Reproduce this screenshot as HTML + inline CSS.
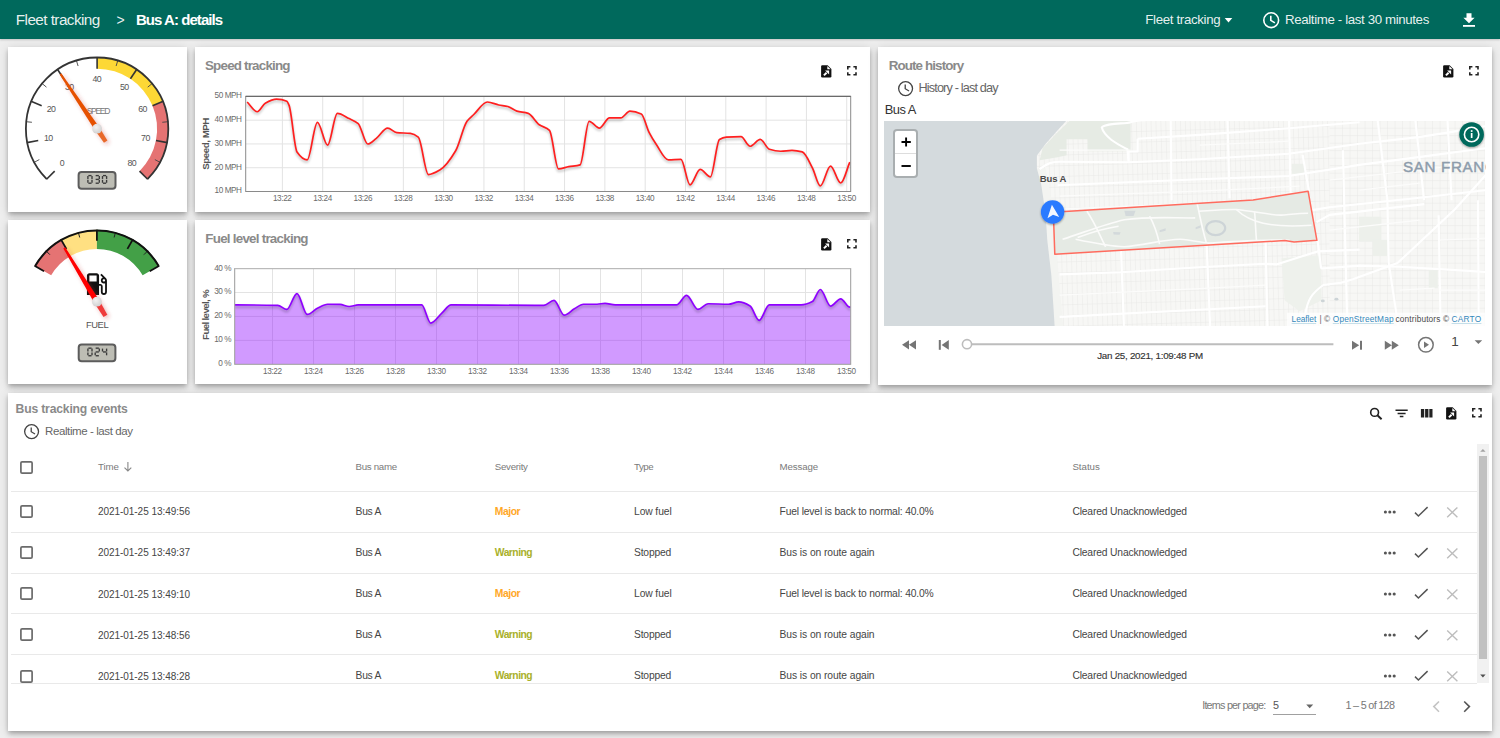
<!DOCTYPE html><html><head><meta charset="utf-8"><style>
*{box-sizing:border-box}
html,body{margin:0;padding:0}
body{width:1500px;height:738px;overflow:hidden;background:#eeeeee;font-family:"Liberation Sans",sans-serif;position:relative}
.a{position:absolute;display:block}
.t{position:absolute;white-space:pre;line-height:1}
.card{position:absolute;background:#fff;box-shadow:0 2px 4px -1px rgba(0,0,0,.2),0 4px 5px 0 rgba(0,0,0,.14),0 1px 10px 0 rgba(0,0,0,.12)}
</style></head><body><div class="a" style="left:0;top:0;width:1500px;height:39px;background:#00695c;box-shadow:0 1px 2px rgba(0,0,0,.18)"></div><span class="t" style="left:15.80px;top:12.19px;font-size:15.3px;color:rgba(255,255,255,0.92);letter-spacing:-0.564px;">Fleet tracking</span><span class="t" style="left:116.50px;top:12.90px;font-size:14px;color:rgba(255,255,255,0.92);">&gt;</span><span class="t" style="left:135.90px;top:12.35px;font-size:15px;color:#fff;font-weight:700;letter-spacing:-0.944px;">Bus A: details</span><span class="t" style="left:1145.30px;top:13.20px;font-size:13.3px;color:rgba(255,255,255,0.92);letter-spacing:-0.341px;">Fleet tracking</span><svg class="a" style="left:1224px;top:17px" width="10" height="7"><path d="M0.7,1 L8.3,1 L4.5,5.6Z" fill="#fff"/></svg><svg class="a" style="left:1261.1px;top:9.5px" width="20.4" height="20.4" viewBox="-10.2 -10.2 20.4 20.4"><circle cx="0" cy="0" r="7.3999999999999995" fill="none" stroke="#fff" stroke-width="1.6"/><path d="M-0.41,-4.51 V0.16 L3.69,2.62" fill="none" stroke="#fff" stroke-width="1.6"/></svg><span class="t" style="left:1285.00px;top:13.20px;font-size:13.3px;color:rgba(255,255,255,0.92);letter-spacing:-0.377px;">Realtime - last 30 minutes</span><svg class="a" style="left:1462px;top:12px" width="14" height="16"><path d="M4.5,1.2 H9.5 V5.8 H12.6 L7,11.2 L1.4,5.8 H4.5Z" fill="#fff"/><rect x="1" y="13" width="12" height="1.8" fill="#fff"/></svg><div class="card" style="left:8px;top:47px;width:179px;height:165px"></div><div class="card" style="left:194.5px;top:47px;width:675.5px;height:165px"></div><div class="card" style="left:8px;top:220px;width:179px;height:164px"></div><div class="card" style="left:194.5px;top:220px;width:675.5px;height:164px"></div><div class="card" style="left:878px;top:47px;width:614px;height:338px"></div><div class="card" style="left:8px;top:393px;width:1484px;height:338px"></div><svg class="a" style="left:0;top:0" width="200" height="400"><defs><filter id="nshadow" x="-50%" y="-50%" width="200%" height="200%"><feGaussianBlur in="SourceAlpha" stdDeviation="2.2"/><feOffset dx="2" dy="2" result="b"/><feFlood flood-color="#c03030" flood-opacity="0.35"/><feComposite in2="b" operator="in"/><feMerge><feMergeNode/><feMergeNode in="SourceGraphic"/></feMerge></filter><radialGradient id="pivg" cx="0.4" cy="0.35" r="0.7"><stop offset="0" stop-color="#f2f2f2"/><stop offset="1" stop-color="#cfcfcf"/></radialGradient></defs><path d="M97.10,57.20 A71.5,71.5 0 0 1 163.16,101.34 L152.53,105.74 A60,60 0 0 0 97.10,68.70Z" fill="#fdd835"/><path d="M163.16,101.34 A71.5,71.5 0 0 1 147.66,179.26 L139.53,171.13 A60,60 0 0 0 152.53,105.74Z" fill="#e57373"/><line x1="54.67" y1="171.13" x2="46.54" y2="179.26" stroke="#333" stroke-width="1.6"/><line x1="39.33" y1="159.58" x2="34.04" y2="162.40" stroke="#444" stroke-width="0.9"/><line x1="38.25" y1="140.41" x2="26.97" y2="142.65" stroke="#333" stroke-width="1.6"/><line x1="31.92" y1="122.28" x2="25.94" y2="121.69" stroke="#444" stroke-width="0.9"/><line x1="41.67" y1="105.74" x2="31.04" y2="101.34" stroke="#333" stroke-width="1.6"/><line x1="46.47" y1="87.15" x2="41.83" y2="83.34" stroke="#444" stroke-width="0.9"/><line x1="63.77" y1="78.81" x2="57.38" y2="69.25" stroke="#333" stroke-width="1.6"/><line x1="78.09" y1="66.02" x2="76.34" y2="60.28" stroke="#444" stroke-width="0.9"/><line x1="97.10" y1="68.70" x2="97.10" y2="57.20" stroke="#333" stroke-width="1.6"/><line x1="116.11" y1="66.02" x2="117.86" y2="60.28" stroke="#444" stroke-width="0.9"/><line x1="130.43" y1="78.81" x2="136.82" y2="69.25" stroke="#333" stroke-width="1.6"/><line x1="147.73" y1="87.15" x2="152.37" y2="83.34" stroke="#444" stroke-width="0.9"/><line x1="152.53" y1="105.74" x2="163.16" y2="101.34" stroke="#333" stroke-width="1.6"/><line x1="162.28" y1="122.28" x2="168.26" y2="121.69" stroke="#444" stroke-width="0.9"/><line x1="155.95" y1="140.41" x2="167.23" y2="142.65" stroke="#333" stroke-width="1.6"/><line x1="154.87" y1="159.58" x2="160.16" y2="162.40" stroke="#444" stroke-width="0.9"/><line x1="139.53" y1="171.13" x2="147.66" y2="179.26" stroke="#333" stroke-width="1.6"/><path d="M46.75,179.05 A71.2,71.2 0 1 1 147.45,179.05" fill="none" stroke="#333" stroke-width="1.8"/><rect x="78.6" y="171.9" width="36.900000000000006" height="16.799999999999983" rx="3" fill="#bdbdb4" stroke="#5c5c5c" stroke-width="2"/><line x1="88.35" y1="175.60" x2="91.55" y2="175.60" stroke="#3a3a3a" stroke-width="1.35"/><line x1="92.00" y1="176.05" x2="92.00" y2="178.95" stroke="#3a3a3a" stroke-width="1.35"/><line x1="92.00" y1="179.85" x2="92.00" y2="182.75" stroke="#3a3a3a" stroke-width="1.35"/><line x1="88.35" y1="183.20" x2="91.55" y2="183.20" stroke="#3a3a3a" stroke-width="1.35"/><line x1="87.90" y1="179.85" x2="87.90" y2="182.75" stroke="#3a3a3a" stroke-width="1.35"/><line x1="87.90" y1="176.05" x2="87.90" y2="178.95" stroke="#3a3a3a" stroke-width="1.35"/><line x1="95.65" y1="175.60" x2="98.85" y2="175.60" stroke="#3a3a3a" stroke-width="1.35"/><line x1="99.30" y1="176.05" x2="99.30" y2="178.95" stroke="#3a3a3a" stroke-width="1.35"/><line x1="95.65" y1="179.40" x2="98.85" y2="179.40" stroke="#3a3a3a" stroke-width="1.35"/><line x1="99.30" y1="179.85" x2="99.30" y2="182.75" stroke="#3a3a3a" stroke-width="1.35"/><line x1="95.65" y1="183.20" x2="98.85" y2="183.20" stroke="#3a3a3a" stroke-width="1.35"/><line x1="102.95" y1="175.60" x2="106.15" y2="175.60" stroke="#3a3a3a" stroke-width="1.35"/><line x1="106.60" y1="176.05" x2="106.60" y2="178.95" stroke="#3a3a3a" stroke-width="1.35"/><line x1="106.60" y1="179.85" x2="106.60" y2="182.75" stroke="#3a3a3a" stroke-width="1.35"/><line x1="102.95" y1="183.20" x2="106.15" y2="183.20" stroke="#3a3a3a" stroke-width="1.35"/><line x1="102.50" y1="179.85" x2="102.50" y2="182.75" stroke="#3a3a3a" stroke-width="1.35"/><line x1="102.50" y1="176.05" x2="102.50" y2="178.95" stroke="#3a3a3a" stroke-width="1.35"/><path d="M34.55,265.70 A72,72 0 0 1 60.90,239.35 L70.50,255.97 A52.8,52.8 0 0 0 51.17,275.30Z" fill="#e57373"/><path d="M60.90,239.35 A72,72 0 0 1 96.90,229.70 L96.90,248.90 A52.8,52.8 0 0 0 70.50,255.97Z" fill="#ffe082"/><path d="M96.90,229.70 A72,72 0 0 1 159.25,265.70 L142.63,275.30 A52.8,52.8 0 0 0 96.90,248.90Z" fill="#43a047"/><line x1="44.07" y1="271.20" x2="34.55" y2="265.70" stroke="#111" stroke-width="1.8"/><line x1="66.40" y1="248.87" x2="60.90" y2="239.35" stroke="#111" stroke-width="1.8"/><line x1="96.90" y1="240.70" x2="96.90" y2="229.70" stroke="#111" stroke-width="1.8"/><line x1="127.40" y1="248.87" x2="132.90" y2="239.35" stroke="#111" stroke-width="1.8"/><line x1="149.73" y1="271.20" x2="159.25" y2="265.70" stroke="#111" stroke-width="1.8"/><line x1="49.88" y1="254.68" x2="45.99" y2="250.79" stroke="#222" stroke-width="1"/><line x1="79.69" y1="237.47" x2="78.27" y2="232.15" stroke="#222" stroke-width="1"/><line x1="114.11" y1="237.47" x2="115.53" y2="232.15" stroke="#222" stroke-width="1"/><line x1="143.92" y1="254.68" x2="147.81" y2="250.79" stroke="#222" stroke-width="1"/><path d="M35.15,266.05 A71.3,71.3 0 0 1 158.65,266.05" fill="none" stroke="#111" stroke-width="2"/><rect x="78.7" y="344.5" width="36.7" height="16.69999999999999" rx="3" fill="#bdbdb4" stroke="#5c5c5c" stroke-width="2"/><line x1="88.35" y1="348.15" x2="91.55" y2="348.15" stroke="#3a3a3a" stroke-width="1.35"/><line x1="92.00" y1="348.60" x2="92.00" y2="351.50" stroke="#3a3a3a" stroke-width="1.35"/><line x1="92.00" y1="352.40" x2="92.00" y2="355.30" stroke="#3a3a3a" stroke-width="1.35"/><line x1="88.35" y1="355.75" x2="91.55" y2="355.75" stroke="#3a3a3a" stroke-width="1.35"/><line x1="87.90" y1="352.40" x2="87.90" y2="355.30" stroke="#3a3a3a" stroke-width="1.35"/><line x1="87.90" y1="348.60" x2="87.90" y2="351.50" stroke="#3a3a3a" stroke-width="1.35"/><line x1="95.65" y1="348.15" x2="98.85" y2="348.15" stroke="#3a3a3a" stroke-width="1.35"/><line x1="99.30" y1="348.60" x2="99.30" y2="351.50" stroke="#3a3a3a" stroke-width="1.35"/><line x1="95.65" y1="351.95" x2="98.85" y2="351.95" stroke="#3a3a3a" stroke-width="1.35"/><line x1="95.20" y1="352.40" x2="95.20" y2="355.30" stroke="#3a3a3a" stroke-width="1.35"/><line x1="95.65" y1="355.75" x2="98.85" y2="355.75" stroke="#3a3a3a" stroke-width="1.35"/><line x1="102.50" y1="348.60" x2="102.50" y2="351.50" stroke="#3a3a3a" stroke-width="1.35"/><line x1="102.95" y1="351.95" x2="106.15" y2="351.95" stroke="#3a3a3a" stroke-width="1.35"/><line x1="106.60" y1="348.60" x2="106.60" y2="351.50" stroke="#3a3a3a" stroke-width="1.35"/><line x1="106.60" y1="352.40" x2="106.60" y2="355.30" stroke="#3a3a3a" stroke-width="1.35"/><g transform="translate(82.1,269.5) scale(1.211)"><path d="M19.77 7.23l.01-.01-3.72-3.72L15 4.56l2.11 2.11c-.94.36-1.61 1.26-1.61 2.33 0 1.38 1.12 2.5 2.5 2.5.36 0 .69-.08 1-.21v7.21c0 .55-.45 1-1 1s-1-.45-1-1V14c0-1.1-.9-2-2-2h-1V5c0-1.1-.9-2-2-2H6c-1.1 0-2 .9-2 2v16h10v-7.5h1.5v5c0 1.38 1.12 2.5 2.5 2.5s2.5-1.12 2.5-2.5V9c0-.69-.28-1.32-.73-1.77zM12 10H6V5h6v5zm6 0c-.55 0-1-.45-1-1s.45-1 1-1 1 .45 1 1-.45 1-1 1z" fill="#111"/></g></svg><span class="t" style="left:59.65px;top:159.22px;font-size:8.8px;color:#555;">0</span><span class="t" style="left:43.90px;top:133.88px;font-size:8.8px;color:#555;letter-spacing:-0.497px;">10</span><span class="t" style="left:46.72px;top:105.28px;font-size:8.8px;color:#555;letter-spacing:-0.497px;">20</span><span class="t" style="left:64.95px;top:83.06px;font-size:8.8px;color:#555;letter-spacing:-0.497px;">30</span><span class="t" style="left:92.45px;top:74.72px;font-size:8.8px;color:#555;letter-spacing:-0.497px;">40</span><span class="t" style="left:119.95px;top:83.06px;font-size:8.8px;color:#555;letter-spacing:-0.497px;">50</span><span class="t" style="left:138.18px;top:105.28px;font-size:8.8px;color:#555;letter-spacing:-0.497px;">60</span><span class="t" style="left:141.00px;top:133.88px;font-size:8.8px;color:#555;letter-spacing:-0.497px;">70</span><span class="t" style="left:127.45px;top:159.22px;font-size:8.8px;color:#555;letter-spacing:-0.497px;">80</span><span class="t" style="left:86.75px;top:106.89px;font-size:8.6px;color:#777;letter-spacing:-1.360px;">SPEED</span><span class="t" style="left:85.90px;top:320.21px;font-size:9.4px;color:#555;letter-spacing:-0.390px;">FUEL</span><svg class="a" style="left:0;top:0" width="200" height="400"><g filter="url(#nshadow)"><path d="M99.26,127.26 L61.26,73.27 L59.60,74.38 L94.94,130.14Z" fill="#e65100"/><path d="M99.26,127.26 L107.44,140.43 L103.98,142.74 L94.94,130.14Z" fill="#e8692a"/></g><circle cx="97.1" cy="128.7" r="4.9" fill="url(#pivg)"/><g filter="url(#nshadow)"><path d="M99.30,300.25 L65.21,247.24 L63.32,248.38 L94.50,303.15Z" fill="#ff0000"/><path d="M99.30,300.25 L107.36,314.65 L103.53,316.97 L94.50,303.15Z" fill="#ef3a3a"/></g><circle cx="96.9" cy="301.7" r="4.9" fill="url(#pivg)"/></svg><svg class="a" style="left:0;top:0" width="880" height="400"><defs><filter id="lshadow" x="-5%" y="-20%" width="110%" height="140%"><feGaussianBlur stdDeviation="1.2"/></filter><clipPath id="cp1"><rect x="245.7" y="96.4" width="605" height="95.1"/></clipPath><clipPath id="cp2"><rect x="234.7" y="268.6" width="616" height="95.7"/></clipPath></defs><line x1="245.7" y1="120.18" x2="850.7" y2="120.18" stroke="#e3e3e3" stroke-width="1"/><line x1="245.7" y1="143.95" x2="850.7" y2="143.95" stroke="#e3e3e3" stroke-width="1"/><line x1="245.7" y1="167.72" x2="850.7" y2="167.72" stroke="#e3e3e3" stroke-width="1"/><line x1="245.7" y1="191.50" x2="850.7" y2="191.50" stroke="#e3e3e3" stroke-width="1"/><line x1="282.40" y1="96.4" x2="282.40" y2="191.5" stroke="#e3e3e3" stroke-width="1"/><line x1="322.71" y1="96.4" x2="322.71" y2="191.5" stroke="#e3e3e3" stroke-width="1"/><line x1="363.02" y1="96.4" x2="363.02" y2="191.5" stroke="#e3e3e3" stroke-width="1"/><line x1="403.33" y1="96.4" x2="403.33" y2="191.5" stroke="#e3e3e3" stroke-width="1"/><line x1="443.64" y1="96.4" x2="443.64" y2="191.5" stroke="#e3e3e3" stroke-width="1"/><line x1="483.95" y1="96.4" x2="483.95" y2="191.5" stroke="#e3e3e3" stroke-width="1"/><line x1="524.26" y1="96.4" x2="524.26" y2="191.5" stroke="#e3e3e3" stroke-width="1"/><line x1="564.57" y1="96.4" x2="564.57" y2="191.5" stroke="#e3e3e3" stroke-width="1"/><line x1="604.88" y1="96.4" x2="604.88" y2="191.5" stroke="#e3e3e3" stroke-width="1"/><line x1="645.19" y1="96.4" x2="645.19" y2="191.5" stroke="#e3e3e3" stroke-width="1"/><line x1="685.50" y1="96.4" x2="685.50" y2="191.5" stroke="#e3e3e3" stroke-width="1"/><line x1="725.81" y1="96.4" x2="725.81" y2="191.5" stroke="#e3e3e3" stroke-width="1"/><line x1="766.12" y1="96.4" x2="766.12" y2="191.5" stroke="#e3e3e3" stroke-width="1"/><line x1="806.43" y1="96.4" x2="806.43" y2="191.5" stroke="#e3e3e3" stroke-width="1"/><line x1="846.74" y1="96.4" x2="846.74" y2="191.5" stroke="#e3e3e3" stroke-width="1"/><g clip-path="url(#cp1)"><path d="M247.13,102.01 C250.53,105.27 253.93,111.77 257.33,111.77 C259.98,111.77 262.62,104.62 265.27,103.15 C269.04,101.04 272.82,99.07 276.60,99.07 C280.00,99.07 283.40,99.72 286.80,101.33 C287.56,101.69 288.31,103.52 289.07,105.42 C291.71,112.05 294.36,148.17 297.00,151.92 C300.40,156.75 303.80,159.86 307.20,159.86 C310.60,159.86 314.00,122.43 317.40,122.43 C320.80,122.43 324.20,145.12 327.60,145.12 C330.85,145.12 334.10,113.36 337.35,113.36 C341.28,113.36 345.20,116.64 349.13,118.58 C352.16,120.07 355.18,120.93 358.20,123.57 C361.37,126.33 364.55,143.98 367.72,143.98 C370.59,143.98 373.46,140.48 376.33,138.31 C380.11,135.46 383.89,128.10 387.67,128.10 C390.69,128.10 393.71,132.35 396.73,132.64 C401.27,133.08 405.80,132.88 410.33,133.32 C412.98,133.58 415.62,134.98 418.27,137.18 C421.67,140.01 425.07,174.61 428.47,174.61 C432.24,174.61 436.02,172.29 439.80,170.07 C445.09,166.97 450.38,159.73 455.67,150.79 C459.44,144.40 463.22,126.56 467.00,121.30 C469.27,118.14 471.53,116.67 473.80,114.49 C478.33,110.13 482.87,102.01 487.40,102.01 C491.18,102.01 494.96,104.18 498.73,104.96 C501.76,105.59 504.78,105.77 507.80,106.55 C510.82,107.34 513.84,110.21 516.87,111.09 C520.64,112.19 524.42,112.09 528.20,113.36 C531.89,114.60 535.58,122.05 539.27,124.70 C542.67,127.14 546.07,126.98 549.47,130.37 C552.49,133.39 555.51,168.94 558.53,168.94 C561.93,168.94 565.33,167.30 568.73,166.67 C572.51,165.96 576.29,166.07 580.07,164.85 C583.09,163.88 586.11,121.30 589.13,121.30 C592.53,121.30 595.93,128.10 599.33,128.10 C602.73,128.10 606.13,117.89 609.53,117.89 C613.31,117.89 617.09,117.89 620.87,117.89 C623.89,117.89 626.91,111.09 629.93,111.09 C633.71,111.09 637.49,112.18 641.27,114.04 C643.91,115.34 646.56,127.51 649.20,132.64 C651.47,137.04 653.73,140.67 656.00,143.98 C660.16,150.07 664.31,159.86 668.47,159.86 C672.62,159.86 676.78,159.41 680.93,159.41 C683.96,159.41 686.98,184.82 690.00,184.82 C693.40,184.82 696.80,169.39 700.20,169.39 C703.60,169.39 707.00,176.88 710.40,176.88 C713.42,176.88 716.44,141.24 719.47,139.45 C721.73,138.10 724.00,137.32 726.27,137.18 C731.18,136.87 736.09,136.72 741.00,136.72 C744.02,136.72 747.04,146.25 750.07,146.25 C753.47,146.25 756.87,139.45 760.27,139.45 C763.29,139.45 766.31,148.24 769.33,149.20 C773.11,150.40 776.89,151.24 780.67,151.24 C784.44,151.24 788.22,150.34 792.00,150.34 C795.40,150.34 798.80,150.96 802.20,151.92 C805.60,152.89 809.00,161.45 812.40,167.80 C815.04,172.74 817.69,185.95 820.33,185.95 C823.73,185.95 827.13,166.22 830.53,166.22 C833.93,166.22 837.33,183.00 840.73,183.00 C843.76,183.00 846.78,169.09 849.80,162.13" fill="none" stroke="rgba(0,0,0,0.18)" stroke-width="2.5" transform="translate(0,2)" filter="url(#lshadow)"/><path d="M247.13,102.01 C250.53,105.27 253.93,111.77 257.33,111.77 C259.98,111.77 262.62,104.62 265.27,103.15 C269.04,101.04 272.82,99.07 276.60,99.07 C280.00,99.07 283.40,99.72 286.80,101.33 C287.56,101.69 288.31,103.52 289.07,105.42 C291.71,112.05 294.36,148.17 297.00,151.92 C300.40,156.75 303.80,159.86 307.20,159.86 C310.60,159.86 314.00,122.43 317.40,122.43 C320.80,122.43 324.20,145.12 327.60,145.12 C330.85,145.12 334.10,113.36 337.35,113.36 C341.28,113.36 345.20,116.64 349.13,118.58 C352.16,120.07 355.18,120.93 358.20,123.57 C361.37,126.33 364.55,143.98 367.72,143.98 C370.59,143.98 373.46,140.48 376.33,138.31 C380.11,135.46 383.89,128.10 387.67,128.10 C390.69,128.10 393.71,132.35 396.73,132.64 C401.27,133.08 405.80,132.88 410.33,133.32 C412.98,133.58 415.62,134.98 418.27,137.18 C421.67,140.01 425.07,174.61 428.47,174.61 C432.24,174.61 436.02,172.29 439.80,170.07 C445.09,166.97 450.38,159.73 455.67,150.79 C459.44,144.40 463.22,126.56 467.00,121.30 C469.27,118.14 471.53,116.67 473.80,114.49 C478.33,110.13 482.87,102.01 487.40,102.01 C491.18,102.01 494.96,104.18 498.73,104.96 C501.76,105.59 504.78,105.77 507.80,106.55 C510.82,107.34 513.84,110.21 516.87,111.09 C520.64,112.19 524.42,112.09 528.20,113.36 C531.89,114.60 535.58,122.05 539.27,124.70 C542.67,127.14 546.07,126.98 549.47,130.37 C552.49,133.39 555.51,168.94 558.53,168.94 C561.93,168.94 565.33,167.30 568.73,166.67 C572.51,165.96 576.29,166.07 580.07,164.85 C583.09,163.88 586.11,121.30 589.13,121.30 C592.53,121.30 595.93,128.10 599.33,128.10 C602.73,128.10 606.13,117.89 609.53,117.89 C613.31,117.89 617.09,117.89 620.87,117.89 C623.89,117.89 626.91,111.09 629.93,111.09 C633.71,111.09 637.49,112.18 641.27,114.04 C643.91,115.34 646.56,127.51 649.20,132.64 C651.47,137.04 653.73,140.67 656.00,143.98 C660.16,150.07 664.31,159.86 668.47,159.86 C672.62,159.86 676.78,159.41 680.93,159.41 C683.96,159.41 686.98,184.82 690.00,184.82 C693.40,184.82 696.80,169.39 700.20,169.39 C703.60,169.39 707.00,176.88 710.40,176.88 C713.42,176.88 716.44,141.24 719.47,139.45 C721.73,138.10 724.00,137.32 726.27,137.18 C731.18,136.87 736.09,136.72 741.00,136.72 C744.02,136.72 747.04,146.25 750.07,146.25 C753.47,146.25 756.87,139.45 760.27,139.45 C763.29,139.45 766.31,148.24 769.33,149.20 C773.11,150.40 776.89,151.24 780.67,151.24 C784.44,151.24 788.22,150.34 792.00,150.34 C795.40,150.34 798.80,150.96 802.20,151.92 C805.60,152.89 809.00,161.45 812.40,167.80 C815.04,172.74 817.69,185.95 820.33,185.95 C823.73,185.95 827.13,166.22 830.53,166.22 C833.93,166.22 837.33,183.00 840.73,183.00 C843.76,183.00 846.78,169.09 849.80,162.13" fill="none" stroke="#ff1f1f" stroke-width="1.7" stroke-linejoin="round"/></g><rect x="245.7" y="96.4" width="605.0" height="95.1" fill="none" stroke="#8a8a8a" stroke-width="1"/><line x1="245.7" y1="96.4" x2="850.7" y2="96.4" stroke="#6a6a6a" stroke-width="1.2"/><line x1="234.7" y1="292.53" x2="850.7" y2="292.53" stroke="#e3e3e3" stroke-width="1"/><line x1="234.7" y1="316.45" x2="850.7" y2="316.45" stroke="#e3e3e3" stroke-width="1"/><line x1="234.7" y1="340.38" x2="850.7" y2="340.38" stroke="#e3e3e3" stroke-width="1"/><line x1="272.50" y1="268.6" x2="272.50" y2="364.3" stroke="#e3e3e3" stroke-width="1"/><line x1="313.50" y1="268.6" x2="313.50" y2="364.3" stroke="#e3e3e3" stroke-width="1"/><line x1="354.50" y1="268.6" x2="354.50" y2="364.3" stroke="#e3e3e3" stroke-width="1"/><line x1="395.50" y1="268.6" x2="395.50" y2="364.3" stroke="#e3e3e3" stroke-width="1"/><line x1="436.50" y1="268.6" x2="436.50" y2="364.3" stroke="#e3e3e3" stroke-width="1"/><line x1="477.50" y1="268.6" x2="477.50" y2="364.3" stroke="#e3e3e3" stroke-width="1"/><line x1="518.50" y1="268.6" x2="518.50" y2="364.3" stroke="#e3e3e3" stroke-width="1"/><line x1="559.50" y1="268.6" x2="559.50" y2="364.3" stroke="#e3e3e3" stroke-width="1"/><line x1="600.50" y1="268.6" x2="600.50" y2="364.3" stroke="#e3e3e3" stroke-width="1"/><line x1="641.50" y1="268.6" x2="641.50" y2="364.3" stroke="#e3e3e3" stroke-width="1"/><line x1="682.50" y1="268.6" x2="682.50" y2="364.3" stroke="#e3e3e3" stroke-width="1"/><line x1="723.50" y1="268.6" x2="723.50" y2="364.3" stroke="#e3e3e3" stroke-width="1"/><line x1="764.50" y1="268.6" x2="764.50" y2="364.3" stroke="#e3e3e3" stroke-width="1"/><line x1="805.50" y1="268.6" x2="805.50" y2="364.3" stroke="#e3e3e3" stroke-width="1"/><g clip-path="url(#cp2)"><path d="M234.70,304.91 C235.07,304.91 235.43,304.91 235.80,304.91 C249.78,304.91 263.76,304.99 277.73,305.36 C280.76,305.44 283.78,309.45 286.80,309.45 C290.20,309.45 293.60,293.57 297.00,293.57 C300.40,293.57 303.80,314.44 307.20,314.44 C310.60,314.44 314.00,309.95 317.40,308.31 C320.80,306.68 324.20,304.23 327.60,304.23 C331.76,304.23 335.91,304.31 340.07,304.46 C343.09,304.56 346.11,306.50 349.13,306.50 C352.16,306.50 355.18,304.91 358.20,304.91 C379.36,304.91 400.51,304.91 421.67,304.91 C424.69,304.91 427.71,323.06 430.73,323.06 C434.51,323.06 438.29,316.20 442.07,312.85 C445.09,310.17 448.11,304.91 451.13,304.91 C479.09,304.91 507.04,305.36 535.00,305.36 C537.93,305.36 540.87,305.36 543.80,305.36 C547.20,305.36 550.60,300.37 554.00,300.37 C557.40,300.37 560.80,315.12 564.20,315.12 C567.60,315.12 571.00,310.65 574.40,308.77 C577.42,307.09 580.44,304.23 583.47,304.23 C588.00,304.23 592.53,304.23 597.07,304.23 C599.71,304.23 602.36,303.32 605.00,303.32 C608.40,303.32 611.80,304.91 615.20,304.91 C635.60,304.91 656.00,304.91 676.40,304.91 C679.80,304.91 683.20,295.38 686.60,295.38 C690.38,295.38 694.16,309.45 697.93,309.45 C701.33,309.45 704.73,303.77 708.13,303.77 C714.93,303.77 721.73,304.23 728.53,304.23 C731.93,304.23 735.33,301.96 738.73,301.96 C742.51,301.96 746.29,303.77 750.07,306.04 C753.09,307.86 756.11,320.34 759.13,320.34 C762.53,320.34 765.93,304.91 769.33,304.91 C779.91,304.91 790.49,304.91 801.07,304.91 C804.84,304.91 808.62,303.48 812.40,301.51 C815.04,300.13 817.69,289.48 820.33,289.48 C823.73,289.48 827.13,306.04 830.53,306.04 C833.93,306.04 837.33,298.78 840.73,298.78 C843.76,298.78 846.78,307.18 849.80,307.18 C850.10,307.18 850.40,307.18 850.70,307.18 L850.7,364.3 L234.7,364.3Z" fill="rgba(143,10,255,0.41)"/></g><path d="M234.70,304.91 C235.07,304.91 235.43,304.91 235.80,304.91 C249.78,304.91 263.76,304.99 277.73,305.36 C280.76,305.44 283.78,309.45 286.80,309.45 C290.20,309.45 293.60,293.57 297.00,293.57 C300.40,293.57 303.80,314.44 307.20,314.44 C310.60,314.44 314.00,309.95 317.40,308.31 C320.80,306.68 324.20,304.23 327.60,304.23 C331.76,304.23 335.91,304.31 340.07,304.46 C343.09,304.56 346.11,306.50 349.13,306.50 C352.16,306.50 355.18,304.91 358.20,304.91 C379.36,304.91 400.51,304.91 421.67,304.91 C424.69,304.91 427.71,323.06 430.73,323.06 C434.51,323.06 438.29,316.20 442.07,312.85 C445.09,310.17 448.11,304.91 451.13,304.91 C479.09,304.91 507.04,305.36 535.00,305.36 C537.93,305.36 540.87,305.36 543.80,305.36 C547.20,305.36 550.60,300.37 554.00,300.37 C557.40,300.37 560.80,315.12 564.20,315.12 C567.60,315.12 571.00,310.65 574.40,308.77 C577.42,307.09 580.44,304.23 583.47,304.23 C588.00,304.23 592.53,304.23 597.07,304.23 C599.71,304.23 602.36,303.32 605.00,303.32 C608.40,303.32 611.80,304.91 615.20,304.91 C635.60,304.91 656.00,304.91 676.40,304.91 C679.80,304.91 683.20,295.38 686.60,295.38 C690.38,295.38 694.16,309.45 697.93,309.45 C701.33,309.45 704.73,303.77 708.13,303.77 C714.93,303.77 721.73,304.23 728.53,304.23 C731.93,304.23 735.33,301.96 738.73,301.96 C742.51,301.96 746.29,303.77 750.07,306.04 C753.09,307.86 756.11,320.34 759.13,320.34 C762.53,320.34 765.93,304.91 769.33,304.91 C779.91,304.91 790.49,304.91 801.07,304.91 C804.84,304.91 808.62,303.48 812.40,301.51 C815.04,300.13 817.69,289.48 820.33,289.48 C823.73,289.48 827.13,306.04 830.53,306.04 C833.93,306.04 837.33,298.78 840.73,298.78 C843.76,298.78 846.78,307.18 849.80,307.18 C850.10,307.18 850.40,307.18 850.70,307.18" fill="none" stroke="rgba(0,0,0,0.18)" stroke-width="2.5" transform="translate(0,2)" filter="url(#lshadow)" clip-path="url(#cp2)"/><path d="M234.70,304.91 C235.07,304.91 235.43,304.91 235.80,304.91 C249.78,304.91 263.76,304.99 277.73,305.36 C280.76,305.44 283.78,309.45 286.80,309.45 C290.20,309.45 293.60,293.57 297.00,293.57 C300.40,293.57 303.80,314.44 307.20,314.44 C310.60,314.44 314.00,309.95 317.40,308.31 C320.80,306.68 324.20,304.23 327.60,304.23 C331.76,304.23 335.91,304.31 340.07,304.46 C343.09,304.56 346.11,306.50 349.13,306.50 C352.16,306.50 355.18,304.91 358.20,304.91 C379.36,304.91 400.51,304.91 421.67,304.91 C424.69,304.91 427.71,323.06 430.73,323.06 C434.51,323.06 438.29,316.20 442.07,312.85 C445.09,310.17 448.11,304.91 451.13,304.91 C479.09,304.91 507.04,305.36 535.00,305.36 C537.93,305.36 540.87,305.36 543.80,305.36 C547.20,305.36 550.60,300.37 554.00,300.37 C557.40,300.37 560.80,315.12 564.20,315.12 C567.60,315.12 571.00,310.65 574.40,308.77 C577.42,307.09 580.44,304.23 583.47,304.23 C588.00,304.23 592.53,304.23 597.07,304.23 C599.71,304.23 602.36,303.32 605.00,303.32 C608.40,303.32 611.80,304.91 615.20,304.91 C635.60,304.91 656.00,304.91 676.40,304.91 C679.80,304.91 683.20,295.38 686.60,295.38 C690.38,295.38 694.16,309.45 697.93,309.45 C701.33,309.45 704.73,303.77 708.13,303.77 C714.93,303.77 721.73,304.23 728.53,304.23 C731.93,304.23 735.33,301.96 738.73,301.96 C742.51,301.96 746.29,303.77 750.07,306.04 C753.09,307.86 756.11,320.34 759.13,320.34 C762.53,320.34 765.93,304.91 769.33,304.91 C779.91,304.91 790.49,304.91 801.07,304.91 C804.84,304.91 808.62,303.48 812.40,301.51 C815.04,300.13 817.69,289.48 820.33,289.48 C823.73,289.48 827.13,306.04 830.53,306.04 C833.93,306.04 837.33,298.78 840.73,298.78 C843.76,298.78 846.78,307.18 849.80,307.18 C850.10,307.18 850.40,307.18 850.70,307.18" fill="none" stroke="#8f00ff" stroke-width="1.7" clip-path="url(#cp2)"/><rect x="234.7" y="268.6" width="616.0" height="95.69999999999999" fill="none" stroke="#9a9a9a" stroke-width="1"/><line x1="234.7" y1="268.6" x2="850.7" y2="268.6" stroke="#bdbdbd" stroke-width="1"/></svg><span class="t" style="left:214.60px;top:92.33px;font-size:8.2px;color:#6b6b6b;letter-spacing:-0.436px;">50 MPH</span><span class="t" style="left:214.60px;top:116.11px;font-size:8.2px;color:#6b6b6b;letter-spacing:-0.436px;">40 MPH</span><span class="t" style="left:214.60px;top:139.88px;font-size:8.2px;color:#6b6b6b;letter-spacing:-0.436px;">30 MPH</span><span class="t" style="left:214.60px;top:163.66px;font-size:8.2px;color:#6b6b6b;letter-spacing:-0.436px;">20 MPH</span><span class="t" style="left:214.60px;top:187.43px;font-size:8.2px;color:#6b6b6b;letter-spacing:-0.436px;">10 MPH</span><span class="t" style="left:272.90px;top:195.13px;font-size:8.2px;color:#6b6b6b;letter-spacing:-0.375px;">13:22</span><span class="t" style="left:313.21px;top:195.13px;font-size:8.2px;color:#6b6b6b;letter-spacing:-0.375px;">13:24</span><span class="t" style="left:353.52px;top:195.13px;font-size:8.2px;color:#6b6b6b;letter-spacing:-0.375px;">13:26</span><span class="t" style="left:393.83px;top:195.13px;font-size:8.2px;color:#6b6b6b;letter-spacing:-0.375px;">13:28</span><span class="t" style="left:434.14px;top:195.13px;font-size:8.2px;color:#6b6b6b;letter-spacing:-0.375px;">13:30</span><span class="t" style="left:474.45px;top:195.13px;font-size:8.2px;color:#6b6b6b;letter-spacing:-0.375px;">13:32</span><span class="t" style="left:514.76px;top:195.13px;font-size:8.2px;color:#6b6b6b;letter-spacing:-0.375px;">13:34</span><span class="t" style="left:555.07px;top:195.13px;font-size:8.2px;color:#6b6b6b;letter-spacing:-0.375px;">13:36</span><span class="t" style="left:595.38px;top:195.13px;font-size:8.2px;color:#6b6b6b;letter-spacing:-0.375px;">13:38</span><span class="t" style="left:635.69px;top:195.13px;font-size:8.2px;color:#6b6b6b;letter-spacing:-0.375px;">13:40</span><span class="t" style="left:676.00px;top:195.13px;font-size:8.2px;color:#6b6b6b;letter-spacing:-0.375px;">13:42</span><span class="t" style="left:716.31px;top:195.13px;font-size:8.2px;color:#6b6b6b;letter-spacing:-0.375px;">13:44</span><span class="t" style="left:756.62px;top:195.13px;font-size:8.2px;color:#6b6b6b;letter-spacing:-0.375px;">13:46</span><span class="t" style="left:796.93px;top:195.13px;font-size:8.2px;color:#6b6b6b;letter-spacing:-0.375px;">13:48</span><span class="t" style="left:837.24px;top:195.13px;font-size:8.2px;color:#6b6b6b;letter-spacing:-0.375px;">13:50</span><span class="t" style="left:214.13px;top:264.53px;font-size:8.2px;color:#6b6b6b;letter-spacing:-0.450px;">40 %</span><span class="t" style="left:214.13px;top:288.46px;font-size:8.2px;color:#6b6b6b;letter-spacing:-0.450px;">30 %</span><span class="t" style="left:214.13px;top:312.38px;font-size:8.2px;color:#6b6b6b;letter-spacing:-0.450px;">20 %</span><span class="t" style="left:214.13px;top:336.30px;font-size:8.2px;color:#6b6b6b;letter-spacing:-0.450px;">10 %</span><span class="t" style="left:218.24px;top:360.23px;font-size:8.2px;color:#6b6b6b;letter-spacing:-0.450px;">0 %</span><span class="t" style="left:263.00px;top:367.63px;font-size:8.2px;color:#6b6b6b;letter-spacing:-0.375px;">13:22</span><span class="t" style="left:304.00px;top:367.63px;font-size:8.2px;color:#6b6b6b;letter-spacing:-0.375px;">13:24</span><span class="t" style="left:345.00px;top:367.63px;font-size:8.2px;color:#6b6b6b;letter-spacing:-0.375px;">13:26</span><span class="t" style="left:386.00px;top:367.63px;font-size:8.2px;color:#6b6b6b;letter-spacing:-0.375px;">13:28</span><span class="t" style="left:427.00px;top:367.63px;font-size:8.2px;color:#6b6b6b;letter-spacing:-0.375px;">13:30</span><span class="t" style="left:468.00px;top:367.63px;font-size:8.2px;color:#6b6b6b;letter-spacing:-0.375px;">13:32</span><span class="t" style="left:509.00px;top:367.63px;font-size:8.2px;color:#6b6b6b;letter-spacing:-0.375px;">13:34</span><span class="t" style="left:550.00px;top:367.63px;font-size:8.2px;color:#6b6b6b;letter-spacing:-0.375px;">13:36</span><span class="t" style="left:591.00px;top:367.63px;font-size:8.2px;color:#6b6b6b;letter-spacing:-0.375px;">13:38</span><span class="t" style="left:632.00px;top:367.63px;font-size:8.2px;color:#6b6b6b;letter-spacing:-0.375px;">13:40</span><span class="t" style="left:673.00px;top:367.63px;font-size:8.2px;color:#6b6b6b;letter-spacing:-0.375px;">13:42</span><span class="t" style="left:714.00px;top:367.63px;font-size:8.2px;color:#6b6b6b;letter-spacing:-0.375px;">13:44</span><span class="t" style="left:755.00px;top:367.63px;font-size:8.2px;color:#6b6b6b;letter-spacing:-0.375px;">13:46</span><span class="t" style="left:796.00px;top:367.63px;font-size:8.2px;color:#6b6b6b;letter-spacing:-0.375px;">13:48</span><span class="t" style="left:837.00px;top:367.63px;font-size:8.2px;color:#6b6b6b;letter-spacing:-0.375px;">13:50</span><span class="t" style="left:205.00px;top:59.41px;font-size:13.4px;color:#8a8a8a;font-weight:700;letter-spacing:-0.808px;">Speed tracking</span><span class="t" style="left:205.30px;top:231.91px;font-size:13.4px;color:#8a8a8a;font-weight:700;letter-spacing:-0.758px;">Fuel level tracking</span><span class="t" style="left:888.70px;top:59.41px;font-size:13.4px;color:#8a8a8a;font-weight:700;letter-spacing:-0.893px;">Route history</span><span class="t" style="left:15.60px;top:402.83px;font-size:12.2px;color:#8a8a8a;font-weight:700;letter-spacing:-0.196px;">Bus tracking events</span><svg class="a" style="left:821.2px;top:64.5px" width="11" height="13" viewBox="0 0 11 13"><path d="M1.3,0.2 H6.6 L10.4,4 V11.2 Q10.4,12.4 9.2,12.4 H1.3 Q0.1,12.4 0.1,11.2 V1.4 Q0.1,0.2 1.3,0.2Z" fill="#111"/><path d="M6.3,1.0 L9.6,4.3 H6.3Z" fill="#fff"/><path d="M2.9,10.4 L5.6,7.7" stroke="#fff" stroke-width="2"/><path d="M4.1,5.6 H8.1 V9.6Z" fill="#fff"/></svg><svg class="a" style="left:821.2px;top:237.5px" width="11" height="13" viewBox="0 0 11 13"><path d="M1.3,0.2 H6.6 L10.4,4 V11.2 Q10.4,12.4 9.2,12.4 H1.3 Q0.1,12.4 0.1,11.2 V1.4 Q0.1,0.2 1.3,0.2Z" fill="#111"/><path d="M6.3,1.0 L9.6,4.3 H6.3Z" fill="#fff"/><path d="M2.9,10.4 L5.6,7.7" stroke="#fff" stroke-width="2"/><path d="M4.1,5.6 H8.1 V9.6Z" fill="#fff"/></svg><svg class="a" style="left:1443.2px;top:64.5px" width="11" height="13" viewBox="0 0 11 13"><path d="M1.3,0.2 H6.6 L10.4,4 V11.2 Q10.4,12.4 9.2,12.4 H1.3 Q0.1,12.4 0.1,11.2 V1.4 Q0.1,0.2 1.3,0.2Z" fill="#111"/><path d="M6.3,1.0 L9.6,4.3 H6.3Z" fill="#fff"/><path d="M2.9,10.4 L5.6,7.7" stroke="#fff" stroke-width="2"/><path d="M4.1,5.6 H8.1 V9.6Z" fill="#fff"/></svg><svg class="a" style="left:1445.5px;top:406.5px" width="11" height="13" viewBox="0 0 11 13"><path d="M1.3,0.2 H6.6 L10.4,4 V11.2 Q10.4,12.4 9.2,12.4 H1.3 Q0.1,12.4 0.1,11.2 V1.4 Q0.1,0.2 1.3,0.2Z" fill="#111"/><path d="M6.3,1.0 L9.6,4.3 H6.3Z" fill="#fff"/><path d="M2.9,10.4 L5.6,7.7" stroke="#fff" stroke-width="2"/><path d="M4.1,5.6 H8.1 V9.6Z" fill="#fff"/></svg><svg class="a" style="left:847px;top:65.8px" width="10" height="10" viewBox="0 0 10 10"><path d="M0.8,3.4 V0.8 H3.4 M6.4,0.8 H9 V3.4 M9,6.2 V8.8 H6.4 M3.4,8.8 H0.8 V6.2" fill="none" stroke="#222" stroke-width="1.6"/></svg><svg class="a" style="left:847px;top:238.8px" width="10" height="10" viewBox="0 0 10 10"><path d="M0.8,3.4 V0.8 H3.4 M6.4,0.8 H9 V3.4 M9,6.2 V8.8 H6.4 M3.4,8.8 H0.8 V6.2" fill="none" stroke="#222" stroke-width="1.6"/></svg><svg class="a" style="left:1469px;top:65.8px" width="10" height="10" viewBox="0 0 10 10"><path d="M0.8,3.4 V0.8 H3.4 M6.4,0.8 H9 V3.4 M9,6.2 V8.8 H6.4 M3.4,8.8 H0.8 V6.2" fill="none" stroke="#222" stroke-width="1.6"/></svg><svg class="a" style="left:1471.5px;top:407.8px" width="10" height="10" viewBox="0 0 10 10"><path d="M0.8,3.4 V0.8 H3.4 M6.4,0.8 H9 V3.4 M9,6.2 V8.8 H6.4 M3.4,8.8 H0.8 V6.2" fill="none" stroke="#222" stroke-width="1.6"/></svg><svg class="a" style="left:1369px;top:407px" width="66" height="14"><circle cx="5.6" cy="5.4" r="3.9" fill="none" stroke="#222" stroke-width="1.6"/><path d="M8.4,8.2 L12.6,12.2" stroke="#222" stroke-width="1.9"/><path d="M26.5,3.2 H38.7 M28.6,6.4 H36.6 M30.8,9.6 H34.4" stroke="#222" stroke-width="1.5"/><path d="M51.9,2 H55.2 V10.4 H51.9Z M56.1,2 H59.4 V10.4 H56.1Z M60.3,2 H63.5 V10.4 H60.3Z" fill="#222"/></svg><span class="t" style="left:179.90px;top:139.10px;font-size:9.8px;color:#555;font-weight:700;letter-spacing:-0.492px;transform:rotate(-90deg);transform-origin:50% 50%;">Speed, MPH</span><span class="t" style="left:180.75px;top:309.80px;font-size:9.8px;color:#555;font-weight:700;letter-spacing:-0.676px;transform:rotate(-90deg);transform-origin:50% 50%;">Fuel level, %</span><svg class="a" style="left:895.8px;top:79.30000000000001px" width="19.2" height="19.2" viewBox="-9.6 -9.6 19.2 19.2"><circle cx="0" cy="0" r="6.949999999999999" fill="none" stroke="#444" stroke-width="1.3"/><path d="M-0.38,-4.18 V0.15 L3.42,2.43" fill="none" stroke="#444" stroke-width="1.3"/></svg><span class="t" style="left:918.40px;top:82.11px;font-size:12.7px;color:#666;letter-spacing:-0.840px;">History - last day</span><span class="t" style="left:884.80px;top:103.94px;font-size:12.9px;color:#333;letter-spacing:-0.547px;">Bus A</span><svg class="a" style="left:22.299999999999997px;top:421.79999999999995px" width="19.2" height="19.2" viewBox="-9.6 -9.6 19.2 19.2"><circle cx="0" cy="0" r="6.949999999999999" fill="none" stroke="#444" stroke-width="1.3"/><path d="M-0.38,-4.18 V0.15 L3.42,2.43" fill="none" stroke="#444" stroke-width="1.3"/></svg><span class="t" style="left:45.10px;top:425.62px;font-size:11.5px;color:#666;letter-spacing:-0.407px;">Realtime - last day</span><svg class="a" style="left:884.4px;top:120.8px" width="601.1" height="205.0" viewBox="884.4 120.8 601.1 205.0"><defs><pattern id="blk" x="0.5" y="2" width="4.9" height="10.7" patternUnits="userSpaceOnUse" patternTransform="rotate(-1.6)"><rect width="4.9" height="10.7" fill="#f7f7f5"/><path d="M0,0 V10.7 M0,0 H4.9" stroke="#e6e6e4" stroke-width="0.8"/></pattern><pattern id="blk2" x="0" y="0" width="7.5" height="7.5" patternUnits="userSpaceOnUse"><rect width="7.5" height="7.5" fill="#f7f7f5"/><path d="M0,0 V7.5 M0,0 H7.5" stroke="#e6e6e4" stroke-width="0.8"/></pattern><clipPath id="mapclip"><rect x="884.4" y="120.8" width="601.1" height="205.0"/></clipPath><filter id="mshadow" x="-50%" y="-50%" width="200%" height="200%"><feGaussianBlur in="SourceAlpha" stdDeviation="1.2"/><feOffset dy="1"/><feComponentTransfer><feFuncA type="linear" slope="0.4"/></feComponentTransfer><feMerge><feMergeNode/><feMergeNode in="SourceGraphic"/></feMerge></filter></defs><g clip-path="url(#mapclip)"><rect x="884.4" y="120.8" width="601.1" height="205.0" fill="url(#blk)"/><rect x="1330" y="120.8" width="160" height="205.0" fill="url(#blk2)"/><path d="M1040,160 L1043,148 L1055,135 L1070,120.5 L1131,120.5 L1131,151 L1088,151 L1088,139 L1067,139 L1067,155 L1058,157 Z" fill="#e6ebe4"/><path d="M1282,258 L1321,255 L1322,300 L1300,311 L1285,300Z" fill="#eef1ec"/><rect x="1359.5" y="216.5" width="22.3" height="25.0" fill="#edf0eb"/><rect x="1372.9" y="239.7" width="16.1" height="16.1" fill="#edf0eb"/><rect x="1429.2" y="270" width="9.0" height="18.0" fill="#edf0eb"/><rect x="1292.2" y="163.6" width="12.2" height="10.0" fill="#edf0eb"/><path d="M1037.3,168.2 L1041.6,184 L1045.9,212.7 L1047.7,240 L1051.8,275.4 L1055.3,330 L1064,330 L1059,275.4 L1056,240 L1054,212.7 L1049,184 L1046,168Z" fill="#f3f4f1"/><path d="M880,118 L1069,118 L1057.4,130.9 L1045.9,143.8 L1037.3,155.3 L1037.3,168.2 L1041.6,184 L1045.9,212.7 L1047.7,240 L1051.8,275.4 L1055.3,330 L880,330Z" fill="#d4dadd"/><path d="M1053,212 L1253.5,199.9 L1308.5,191 L1317.3,240.1 L1294.5,241.9 L1285.2,240.4 L1055.2,254.1Z" fill="#e5eae4"/><path d="M1040,169 C1048,163 1052,161.5 1060,161.5 L1129,162 L1200,159 L1289,153.6 L1360,143.6 L1419,136.9 L1448,132.4 L1486,126" fill="none" stroke="#ffffff" stroke-width="2.1" stroke-linejoin="round"/><path d="M1058,185 L1200,179.1 L1289,175.8 L1360,164.7 L1419,156.9 L1486,148" fill="none" stroke="#ffffff" stroke-width="2.1" stroke-linejoin="round"/><path d="M1138,138.6 L1200,134.7 L1289,128 L1360,122" fill="none" stroke="#ffffff" stroke-width="2.1" stroke-linejoin="round"/><path d="M1138,138.6 L1138,151.3 L1129,151.3 L1129,162" fill="none" stroke="#ffffff" stroke-width="2.1" stroke-linejoin="round"/><path d="M1102,126.9 C1105,138 1120,145 1127.8,149.1 L1129,162" fill="none" stroke="#ffffff" stroke-width="2.1" stroke-linejoin="round"/><path d="M1102,126.9 C1110,122 1125,124 1131,122 C1140,119 1150,121 1155,118" fill="none" stroke="#ffffff" stroke-width="2.1" stroke-linejoin="round"/><path d="M1171.1,118 L1172,200" fill="none" stroke="#ffffff" stroke-width="2.1" stroke-linejoin="round"/><path d="M1227.8,118 L1230,198" fill="none" stroke="#ffffff" stroke-width="2.1" stroke-linejoin="round"/><path d="M1289.4,118 L1291,193" fill="none" stroke="#ffffff" stroke-width="2.1" stroke-linejoin="round"/><path d="M1303,154.7 L1309.4,191" fill="none" stroke="#ffffff" stroke-width="2.1" stroke-linejoin="round"/><path d="M1343.3,150 L1347.8,330" fill="none" stroke="#ffffff" stroke-width="2.1" stroke-linejoin="round"/><path d="M1377.8,118 L1387.8,200 L1389,262 L1398.8,327" fill="none" stroke="#ffffff" stroke-width="2.1" stroke-linejoin="round"/><path d="M1415.6,118 L1424.4,200" fill="none" stroke="#ffffff" stroke-width="2.1" stroke-linejoin="round"/><path d="M1447.8,118 L1452,200" fill="none" stroke="#ffffff" stroke-width="2.1" stroke-linejoin="round"/><path d="M1439,215 L1441,327" fill="none" stroke="#ffffff" stroke-width="2.1" stroke-linejoin="round"/><path d="M1478.4,200 L1479,327" fill="none" stroke="#ffffff" stroke-width="2.1" stroke-linejoin="round"/><path d="M1121.4,250 L1124.3,327" fill="none" stroke="#ffffff" stroke-width="2.1" stroke-linejoin="round"/><path d="M1207.1,246 L1210.6,327" fill="none" stroke="#ffffff" stroke-width="2.1" stroke-linejoin="round"/><path d="M1266,241 L1267.8,327" fill="none" stroke="#ffffff" stroke-width="2.1" stroke-linejoin="round"/><path d="M1317.9,240 L1321.5,268.3" fill="none" stroke="#ffffff" stroke-width="2.1" stroke-linejoin="round"/><path d="M1060,274.2 L1121,272 L1200,267.1 L1266,263.6 L1276.7,264.2 L1317.9,251.2 L1360,249.4" fill="none" stroke="#ffffff" stroke-width="2.1" stroke-linejoin="round"/><path d="M1060,316.7 L1200,309.6 L1266,306" fill="none" stroke="#ffffff" stroke-width="2.1" stroke-linejoin="round"/><path d="M1321.5,268.3 L1360,265.4 L1400,266.5 L1490,271.9" fill="none" stroke="#ffffff" stroke-width="2.1" stroke-linejoin="round"/><path d="M1312.5,209.9 L1330,207 L1424.7,197 L1486,190" fill="none" stroke="#ffffff" stroke-width="2.1" stroke-linejoin="round"/><path d="M1317,222 L1330,214.7 L1424.7,203.9" fill="none" stroke="#ffffff" stroke-width="2.1" stroke-linejoin="round"/><path d="M1306,313 C1308,300 1312,293 1323.8,284.8 L1341.5,282.5 L1353.2,279 L1397.9,262.9 L1455.1,209.3 L1486,175" fill="none" stroke="#ffffff" stroke-width="2.1" stroke-linejoin="round"/><path d="M1197.5,203 C1200,215 1203,230 1206.8,242.9" fill="none" stroke="#fbfbfa" stroke-width="1.6" stroke-linejoin="round"/><path d="M1063,239.1 C1085,232 1105,224 1124.7,219.5 C1150,216 1175,218 1195.6,217.7" fill="none" stroke="#fbfbfa" stroke-width="1.6" stroke-linejoin="round"/><path d="M1199.3,211.1 C1215,210 1225,209 1236.7,209.3 C1255,211 1270,215 1281.5,214.9 C1292,214 1300,213 1308.5,213" fill="none" stroke="#fbfbfa" stroke-width="1.6" stroke-linejoin="round"/><path d="M1076,239 C1095,243 1110,246 1124.7,246.6 C1145,245 1165,239 1180.7,239.1 C1192,240 1200,242 1208.7,242.9 C1240,241 1270,239 1290,240" fill="none" stroke="#fbfbfa" stroke-width="1.6" stroke-linejoin="round"/><path d="M1087.3,211.1 C1095,222 1100,235 1106,246.6" fill="none" stroke="#fbfbfa" stroke-width="1.6" stroke-linejoin="round"/><path d="M1078,237.3 C1092,232 1105,228 1119,226" fill="none" stroke="#fbfbfa" stroke-width="1.6" stroke-linejoin="round"/><path d="M1255,212 C1256,222 1256,232 1257,241" fill="none" stroke="#fbfbfa" stroke-width="1.6" stroke-linejoin="round"/><path d="M1236.7,209.3 C1250,222 1270,228 1312,225" fill="none" stroke="#fbfbfa" stroke-width="1.6" stroke-linejoin="round"/><path d="M1150,216 C1155,225 1158,235 1160,244" fill="none" stroke="#fbfbfa" stroke-width="1.6" stroke-linejoin="round"/><path d="M1060,150 L1131,150" fill="none" stroke="#fcfcfb" stroke-width="1.2"/><path d="M1060,196 L1200,191 L1300,186" fill="none" stroke="#fcfcfb" stroke-width="1.2"/><path d="M1060,209 L1200,203" fill="none" stroke="#fcfcfb" stroke-width="1.2"/><path d="M1060,295 L1200,288.5 L1266,285" fill="none" stroke="#fcfcfb" stroke-width="1.2"/><path d="M1330,180 L1486,162" fill="none" stroke="#fcfcfb" stroke-width="1.2"/><path d="M1330,230 L1420,220" fill="none" stroke="#fcfcfb" stroke-width="1.2"/><path d="M1440,240 L1486,238" fill="none" stroke="#fcfcfb" stroke-width="1.2"/><path d="M1440,290 L1486,290" fill="none" stroke="#fcfcfb" stroke-width="1.2"/><path d="M1400,290 L1435,288" fill="none" stroke="#fcfcfb" stroke-width="1.2"/><path d="M1200,145 L1290,141" fill="none" stroke="#fcfcfb" stroke-width="1.2"/><path d="M1360,190 L1420,183" fill="none" stroke="#fcfcfb" stroke-width="1.2"/><ellipse cx="1216.1" cy="227.9" rx="9.5" ry="7" fill="none" stroke="#cdd4d7" stroke-width="2.2"/><path d="M1124.7,210.5 L1135.9,210.5 L1134,215.8 L1126,215.8Z" fill="#d3d9db"/><path d="M1113.5,231.7 L1121,232 L1120,234.5 L1114,234.2Z" fill="#d3d9db"/><path d="M1160,230 L1166,228 L1166,230.5 L1160,232Z" fill="#d3d9db"/><path d="M1196,227 L1201,225 L1201,227.5 L1196,229Z" fill="#d3d9db"/><ellipse cx="1323.2" cy="300.7" rx="2" ry="1.4" fill="#cdd4d7"/><ellipse cx="1336.8" cy="299" rx="2" ry="1.4" fill="#cdd4d7"/><path d="M1053,212 L1253.5,199.9 L1308.5,191 L1317.3,240.1 L1294.5,241.9 L1285.2,240.4 L1055.2,254.1 L1054.1,222.3Z" fill="none" stroke="#ff6b5e" stroke-width="1.5" stroke-linejoin="round"/><g filter="url(#mshadow)"><circle cx="1053" cy="211.8" r="11.7" fill="#2a7aff"/></g><path d="M1052.3,204.6 L1059.6,216.8 L1053.4,214.5 L1047.9,218Z" fill="#f4f7ff"/><rect x="1287.5" y="312.5" width="198.0" height="13.5" fill="rgba(255,255,255,0.75)"/></g></svg><div class="a" style="left:892.8px;top:128.8px;width:25.5px;height:49.6px;background:#fff;border:2px solid rgba(0,0,0,0.2);border-radius:4px;background-clip:padding-box"></div><div class="a" style="left:894.8px;top:153.2px;width:21.5px;height:1px;background:#ddd"></div><svg class="a" style="left:901px;top:136.8px" width="11" height="11"><path d="M5.1,0.6 V9.4 M0.5,5 H9.8" stroke="#000" stroke-width="1.9"/></svg><svg class="a" style="left:901px;top:160.6px" width="11" height="11"><path d="M0.5,5 H9.8" stroke="#000" stroke-width="1.9"/></svg><svg class="a" style="left:1457px;top:120px" width="30" height="30"><circle cx="14.6" cy="14.5" r="12.3" fill="#00695c" filter="url(#mshadow)"/><circle cx="14.6" cy="14.5" r="7.2" fill="none" stroke="#fff" stroke-width="1.6"/><rect x="13.8" y="13" width="1.7" height="5" fill="#fff"/><rect x="13.8" y="10.2" width="1.7" height="1.7" fill="#fff"/></svg><span class="t" style="left:1039.80px;top:174.03px;font-size:9.5px;color:#4a4a4a;font-weight:700;letter-spacing:-0.127px;">Bus A</span><div class="a" style="left:1380px;top:150px;width:105.5px;height:30px;overflow:hidden"><div class="a" style="left:-1380px;top:-150px;width:1500px;height:738px"><span class="t" style="left:1402.90px;top:159.48px;font-size:15.2px;color:#8d9cab;letter-spacing:0.654px;-webkit-text-stroke:0.45px #8d9cab;">SAN FRANC</span></div></div><span class="t" style="left:1291.60px;top:314.94px;font-size:8.3px;color:#3388bb;letter-spacing:-0.054px;text-decoration:underline;text-decoration-color:rgba(0,120,168,0.22);">Leaflet</span><span class="t" style="left:1319.60px;top:314.94px;font-size:8.3px;color:#666;">| ©</span><span class="t" style="left:1332.80px;top:314.94px;font-size:8.3px;color:#3388bb;letter-spacing:0.185px;text-decoration:underline;text-decoration-color:rgba(0,120,168,0.22);">OpenStreetMap</span><span class="t" style="left:1395.60px;top:314.94px;font-size:8.3px;color:#4a4a4a;letter-spacing:0.132px;">contributors ©</span><span class="t" style="left:1451.60px;top:314.94px;font-size:8.3px;color:#3388bb;letter-spacing:0.213px;text-decoration:underline;text-decoration-color:rgba(0,120,168,0.22);">CARTO</span><svg class="a" style="left:880px;top:330px" width="612" height="40" viewBox="880 330 612 40"><path d="M909,340.2 V349.4 L902,344.8Z M916,340.2 V349.4 L909,344.8Z" fill="#757575"/><rect x="938.8" y="340" width="2" height="9.8" fill="#757575"/><path d="M948.8,340 V349.8 L941.6,344.9Z" fill="#757575"/><line x1="972" y1="344.2" x2="1333.4" y2="344.2" stroke="#bdbdbd" stroke-width="2"/><circle cx="967" cy="344.2" r="4.6" fill="#fff" stroke="#bdbdbd" stroke-width="1.6"/><path d="M1352,340.8 V349.7 L1359.2,345.2Z" fill="#757575"/><rect x="1360" y="340.8" width="2" height="8.9" fill="#757575"/><path d="M1384.8,340.8 V349.7 L1391.8,345.2Z M1391.8,340.8 V349.7 L1398.8,345.2Z" fill="#757575"/><circle cx="1425.9" cy="344.8" r="7.3" fill="none" stroke="#757575" stroke-width="1.5"/><path d="M1424,341.5 V348.1 L1429,344.8Z" fill="#757575"/><path d="M1474.6,340.2 H1482.2 L1478.4,343.9Z" fill="#757575"/></svg><span class="t" style="left:1451.30px;top:335.21px;font-size:13.4px;color:#444;">1</span><span class="t" style="left:1097.20px;top:351.47px;font-size:9.8px;color:#333;letter-spacing:-0.270px;-webkit-text-stroke:0.15px #333;">Jan 25, 2021, 1:09:48 PM</span><svg class="a" style="left:20.2px;top:460.6px" width="14" height="14"><rect x="0.9" y="0.9" width="11.2" height="11.2" rx="1.2" fill="none" stroke="#6b6b6b" stroke-width="1.7"/></svg><span class="t" style="left:98.00px;top:461.95px;font-size:9.7px;color:#7a7a7a;letter-spacing:-0.057px;">Time</span><span class="t" style="left:355.60px;top:461.95px;font-size:9.7px;color:#7a7a7a;letter-spacing:-0.304px;">Bus name</span><span class="t" style="left:494.80px;top:461.95px;font-size:9.7px;color:#7a7a7a;letter-spacing:-0.271px;">Severity</span><span class="t" style="left:634.00px;top:461.95px;font-size:9.7px;color:#7a7a7a;letter-spacing:-0.439px;">Type</span><span class="t" style="left:779.60px;top:461.95px;font-size:9.7px;color:#7a7a7a;letter-spacing:-0.119px;">Message</span><span class="t" style="left:1072.40px;top:461.95px;font-size:9.7px;color:#7a7a7a;letter-spacing:-0.014px;">Status</span><svg class="a" style="left:123px;top:461px" width="10" height="12"><path d="M4.9,1 V10 M1.5,6.6 L4.9,10 L8.3,6.6" fill="none" stroke="#888" stroke-width="1.1"/></svg><div class="a" style="left:11px;top:490.9px;width:1466px;height:1px;background:#e9e9e9"></div><div class="a" style="left:11px;top:531.7px;width:1466px;height:1px;background:#e9e9e9"></div><div class="a" style="left:11px;top:572.5px;width:1466px;height:1px;background:#e9e9e9"></div><div class="a" style="left:11px;top:613.3px;width:1466px;height:1px;background:#e9e9e9"></div><div class="a" style="left:11px;top:654.1px;width:1466px;height:1px;background:#e9e9e9"></div><div class="a" style="left:11px;top:683.0px;width:1466px;height:1px;background:#e9e9e9"></div><svg class="a" style="left:20.2px;top:505.3px" width="14" height="14"><rect x="0.9" y="0.9" width="11.2" height="11.2" rx="1.2" fill="none" stroke="#6b6b6b" stroke-width="1.7"/></svg><span class="t" style="left:97.90px;top:507.40px;font-size:10.0px;color:#454545;letter-spacing:-0.037px;">2021-01-25 13:49:56</span><span class="t" style="left:355.60px;top:507.14px;font-size:10.3px;color:#454545;letter-spacing:-0.302px;">Bus A</span><span class="t" style="left:494.80px;top:507.14px;font-size:10.3px;color:#ffa726;font-weight:700;letter-spacing:-0.442px;">Major</span><span class="t" style="left:634.00px;top:507.14px;font-size:10.3px;color:#454545;letter-spacing:-0.094px;">Low fuel</span><span class="t" style="left:779.60px;top:507.14px;font-size:10.3px;color:#454545;letter-spacing:-0.164px;">Fuel level is back to normal: 40.0%</span><span class="t" style="left:1072.40px;top:507.14px;font-size:10.3px;color:#454545;letter-spacing:-0.158px;">Cleared Unacknowledged</span><svg class="a" style="left:1380px;top:503.6px" width="82" height="16"><circle cx="5.4" cy="8" r="1.55" fill="#555"/><circle cx="9.8" cy="8" r="1.55" fill="#555"/><circle cx="14.2" cy="8" r="1.55" fill="#555"/><path d="M35,8.6 L38.4,12 L47.6,3.1" fill="none" stroke="#555" stroke-width="1.5"/><path d="M67.2,3.4 L77.4,13.2 M77.4,3.4 L67.2,13.2" fill="none" stroke="#bdbdbd" stroke-width="1.4"/></svg><svg class="a" style="left:20.2px;top:546.35px" width="14" height="14"><rect x="0.9" y="0.9" width="11.2" height="11.2" rx="1.2" fill="none" stroke="#6b6b6b" stroke-width="1.7"/></svg><span class="t" style="left:97.90px;top:548.45px;font-size:10.0px;color:#454545;letter-spacing:-0.037px;">2021-01-25 13:49:37</span><span class="t" style="left:355.60px;top:548.19px;font-size:10.3px;color:#454545;letter-spacing:-0.302px;">Bus A</span><span class="t" style="left:494.80px;top:548.19px;font-size:10.3px;color:#a9b02a;font-weight:700;letter-spacing:-0.502px;">Warning</span><span class="t" style="left:634.00px;top:548.19px;font-size:10.3px;color:#454545;letter-spacing:-0.179px;">Stopped</span><span class="t" style="left:779.60px;top:548.19px;font-size:10.3px;color:#454545;letter-spacing:-0.087px;">Bus is on route again</span><span class="t" style="left:1072.40px;top:548.19px;font-size:10.3px;color:#454545;letter-spacing:-0.158px;">Cleared Unacknowledged</span><svg class="a" style="left:1380px;top:544.6px" width="82" height="16"><circle cx="5.4" cy="8" r="1.55" fill="#555"/><circle cx="9.8" cy="8" r="1.55" fill="#555"/><circle cx="14.2" cy="8" r="1.55" fill="#555"/><path d="M35,8.6 L38.4,12 L47.6,3.1" fill="none" stroke="#555" stroke-width="1.5"/><path d="M67.2,3.4 L77.4,13.2 M77.4,3.4 L67.2,13.2" fill="none" stroke="#bdbdbd" stroke-width="1.4"/></svg><svg class="a" style="left:20.2px;top:587.4000000000001px" width="14" height="14"><rect x="0.9" y="0.9" width="11.2" height="11.2" rx="1.2" fill="none" stroke="#6b6b6b" stroke-width="1.7"/></svg><span class="t" style="left:97.90px;top:589.50px;font-size:10.0px;color:#454545;letter-spacing:-0.037px;">2021-01-25 13:49:10</span><span class="t" style="left:355.60px;top:589.25px;font-size:10.3px;color:#454545;letter-spacing:-0.302px;">Bus A</span><span class="t" style="left:494.80px;top:589.25px;font-size:10.3px;color:#ffa726;font-weight:700;letter-spacing:-0.442px;">Major</span><span class="t" style="left:634.00px;top:589.25px;font-size:10.3px;color:#454545;letter-spacing:-0.094px;">Low fuel</span><span class="t" style="left:779.60px;top:589.25px;font-size:10.3px;color:#454545;letter-spacing:-0.164px;">Fuel level is back to normal: 40.0%</span><span class="t" style="left:1072.40px;top:589.25px;font-size:10.3px;color:#454545;letter-spacing:-0.158px;">Cleared Unacknowledged</span><svg class="a" style="left:1380px;top:585.7px" width="82" height="16"><circle cx="5.4" cy="8" r="1.55" fill="#555"/><circle cx="9.8" cy="8" r="1.55" fill="#555"/><circle cx="14.2" cy="8" r="1.55" fill="#555"/><path d="M35,8.6 L38.4,12 L47.6,3.1" fill="none" stroke="#555" stroke-width="1.5"/><path d="M67.2,3.4 L77.4,13.2 M77.4,3.4 L67.2,13.2" fill="none" stroke="#bdbdbd" stroke-width="1.4"/></svg><svg class="a" style="left:20.2px;top:628.45px" width="14" height="14"><rect x="0.9" y="0.9" width="11.2" height="11.2" rx="1.2" fill="none" stroke="#6b6b6b" stroke-width="1.7"/></svg><span class="t" style="left:97.90px;top:630.55px;font-size:10.0px;color:#454545;letter-spacing:-0.037px;">2021-01-25 13:48:56</span><span class="t" style="left:355.60px;top:630.29px;font-size:10.3px;color:#454545;letter-spacing:-0.302px;">Bus A</span><span class="t" style="left:494.80px;top:630.29px;font-size:10.3px;color:#a9b02a;font-weight:700;letter-spacing:-0.502px;">Warning</span><span class="t" style="left:634.00px;top:630.29px;font-size:10.3px;color:#454545;letter-spacing:-0.179px;">Stopped</span><span class="t" style="left:779.60px;top:630.29px;font-size:10.3px;color:#454545;letter-spacing:-0.087px;">Bus is on route again</span><span class="t" style="left:1072.40px;top:630.29px;font-size:10.3px;color:#454545;letter-spacing:-0.158px;">Cleared Unacknowledged</span><svg class="a" style="left:1380px;top:626.8px" width="82" height="16"><circle cx="5.4" cy="8" r="1.55" fill="#555"/><circle cx="9.8" cy="8" r="1.55" fill="#555"/><circle cx="14.2" cy="8" r="1.55" fill="#555"/><path d="M35,8.6 L38.4,12 L47.6,3.1" fill="none" stroke="#555" stroke-width="1.5"/><path d="M67.2,3.4 L77.4,13.2 M77.4,3.4 L67.2,13.2" fill="none" stroke="#bdbdbd" stroke-width="1.4"/></svg><svg class="a" style="left:20.2px;top:669.5px" width="14" height="14"><rect x="0.9" y="0.9" width="11.2" height="11.2" rx="1.2" fill="none" stroke="#6b6b6b" stroke-width="1.7"/></svg><span class="t" style="left:97.90px;top:671.60px;font-size:10.0px;color:#454545;letter-spacing:-0.037px;">2021-01-25 13:48:28</span><span class="t" style="left:355.60px;top:671.34px;font-size:10.3px;color:#454545;letter-spacing:-0.302px;">Bus A</span><span class="t" style="left:494.80px;top:671.34px;font-size:10.3px;color:#a9b02a;font-weight:700;letter-spacing:-0.502px;">Warning</span><span class="t" style="left:634.00px;top:671.34px;font-size:10.3px;color:#454545;letter-spacing:-0.179px;">Stopped</span><span class="t" style="left:779.60px;top:671.34px;font-size:10.3px;color:#454545;letter-spacing:-0.087px;">Bus is on route again</span><span class="t" style="left:1072.40px;top:671.34px;font-size:10.3px;color:#454545;letter-spacing:-0.158px;">Cleared Unacknowledged</span><svg class="a" style="left:1380px;top:667.8px" width="82" height="16"><circle cx="5.4" cy="8" r="1.55" fill="#555"/><circle cx="9.8" cy="8" r="1.55" fill="#555"/><circle cx="14.2" cy="8" r="1.55" fill="#555"/><path d="M35,8.6 L38.4,12 L47.6,3.1" fill="none" stroke="#555" stroke-width="1.5"/><path d="M67.2,3.4 L77.4,13.2 M77.4,3.4 L67.2,13.2" fill="none" stroke="#bdbdbd" stroke-width="1.4"/></svg><div class="a" style="left:1477.3px;top:444.3px;width:11.6px;height:238.7px;background:#f1f1f1"></div><div class="a" style="left:1478.9px;top:456px;width:8.4px;height:202.7px;background:#c1c1c1"></div><svg class="a" style="left:1477px;top:444px" width="12" height="240"><path d="M3.2,7.8 H8.6 L5.9,5Z" fill="#a3a3a3"/><path d="M3.2,230.6 H8.6 L5.9,233.4Z" fill="#505050"/></svg><span class="t" style="left:1202.20px;top:700.32px;font-size:10.8px;color:#777;letter-spacing:-0.781px;">Items per page:</span><span class="t" style="left:1273.10px;top:700.32px;font-size:10.8px;color:#555;">5</span><div class="a" style="left:1272.5px;top:713.8px;width:43.7px;height:1px;background:#a0a0a0"></div><svg class="a" style="left:1305px;top:703px" width="10" height="7"><path d="M1.2,1.4 H8.2 L4.7,5.2Z" fill="#666"/></svg><span class="t" style="left:1345.50px;top:700.32px;font-size:10.8px;color:#777;letter-spacing:-0.695px;">1 – 5 of 128</span><svg class="a" style="left:1428px;top:699px" width="48" height="15"><path d="M11,2.5 L5.8,7.6 L11,12.7" fill="none" stroke="#c4c4c4" stroke-width="1.6"/><path d="M36.2,2.5 L41.4,7.6 L36.2,12.7" fill="none" stroke="#555" stroke-width="1.6"/></svg></body></html>
